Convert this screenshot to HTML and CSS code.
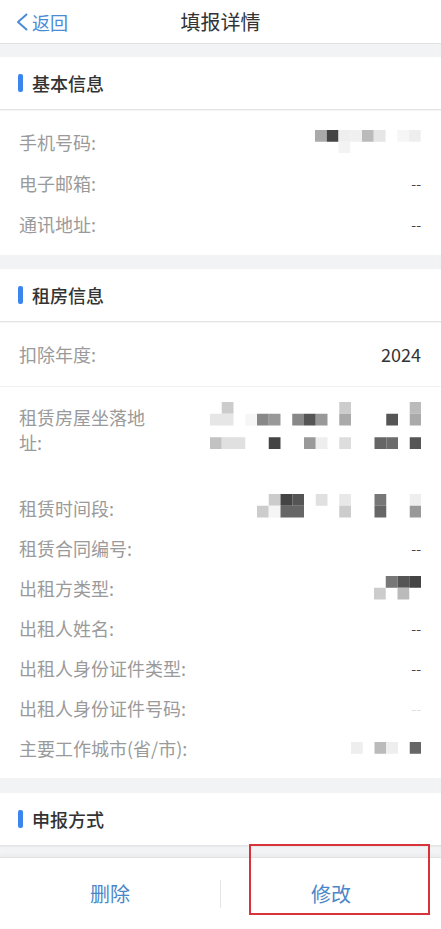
FILE: index.html
```html
<!DOCTYPE html>
<html>
<head>
   <title>填报详情</title>
   <meta charset="utf-8">
   <meta name="viewport" content="width=device-width, initial-scale=1">
   <link rel="stylesheet" href="styles.css">
</head>
<body>
   <header class="topbar">
      <a class="back" href="#">
         <svg class="chevron" width="12" height="18" viewBox="0 0 12 18"><polyline points="10.5,1.5 2,9 10.5,16.5" fill="none" stroke="#4a8bd6" stroke-width="2" stroke-linecap="round" stroke-linejoin="round"/></svg>返回
      </a>
      <h1 class="title">填报详情</h1>
      <span></span>
   </header>

   <!-- 基本信息 -->
   <section class="section">
      <div class="section-head">基本信息</div>
      <div class="section-body basic">
         <div class="row">
            <span class="label">手机号码:</span>
            <svg class="mosaic" width="105.75" height="23.5" viewBox="0 0 9 2">
               <rect x="0" y="0" width="1" height="1" fill="#aaa"/>
               <rect x="1" y="0" width="1" height="1" fill="#444"/>
               <rect x="2" y="0" width="1" height="1" fill="#eee"/>
               <rect x="3" y="0" width="1" height="1" fill="#f0f0f0"/>
               <rect x="4" y="0" width="1" height="1" fill="#bbb"/>
               <rect x="5" y="0" width="1" height="1" fill="#e6e6e6"/>
               <rect x="7" y="0" width="1" height="1" fill="#f6f6f6"/>
               <rect x="8" y="0" width="1" height="1" fill="#eee"/>
               <rect x="2" y="1" width="1" height="1" fill="#f3f3f3"/>
            </svg>
         </div>
         <div class="row">
            <span class="label">电子邮箱:</span>
            <span class="empty">--</span>
         </div>
         <div class="row">
            <span class="label">通讯地址:</span>
            <span class="empty">--</span>
         </div>
      </div>
   </section>

   <!-- 租房信息 -->
   <section class="section">
      <div class="section-head">租房信息</div>
      <div class="section-body rent">
         <div class="row year">
            <span class="label">扣除年度:</span>
            <span class="value">2024</span>
         </div>
         <div class="row address">
            <span class="label">租赁房屋坐落地址:</span>
            <svg class="mosaic" width="211.5" height="47" viewBox="0 0 18 4">
               <rect x="1" y="0" width="1" height="1" fill="#ccc"/>
               <rect x="11" y="0" width="1" height="1" fill="#ccc"/>
               <rect x="17" y="0" width="1" height="1" fill="#bbb"/>
               <rect x="0" y="1" width="2" height="1" fill="#e6e6e6"/>
               <rect x="3" y="1" width="1" height="1" fill="#f6f6f6"/>
               <rect x="4" y="1" width="1" height="1" fill="#888"/>
               <rect x="5" y="1" width="1" height="1" fill="#999"/>
               <rect x="7" y="1" width="1" height="1" fill="#888"/>
               <rect x="8" y="1" width="1" height="1" fill="#555"/>
               <rect x="9" y="1" width="1" height="1" fill="#999"/>
               <rect x="11" y="1" width="1" height="1" fill="#aaa"/>
               <rect x="15" y="1" width="1" height="1" fill="#555"/>
               <rect x="17" y="1" width="1" height="1" fill="#aaa"/>
               <rect x="0" y="3" width="1" height="1" fill="#c2c2c2"/>
               <rect x="1" y="3" width="2" height="1" fill="#e0e0e0"/>
               <rect x="5" y="3" width="1" height="1" fill="#444"/>
               <rect x="8" y="3" width="1" height="1" fill="#999"/>
               <rect x="9" y="3" width="1" height="1" fill="#eee"/>
               <rect x="11" y="3" width="1" height="1" fill="#ddd"/>
               <rect x="14" y="3" width="1" height="1" fill="#666"/>
               <rect x="15" y="3" width="1" height="1" fill="#6c6c6c"/>
               <rect x="17" y="3" width="1" height="1" fill="#555"/>
            </svg>
         </div>
         <div class="row">
            <span class="label">租赁时间段:</span>
            <svg class="mosaic up" width="164.5" height="23.5" viewBox="0 0 14 2">
               <rect x="1" y="0" width="1" height="1" fill="#ccc"/>
               <rect x="2" y="0" width="1" height="1" fill="#444"/>
               <rect x="3" y="0" width="1" height="1" fill="#555"/>
               <rect x="5" y="0" width="1" height="1" fill="#e0e0e0"/>
               <rect x="7" y="0" width="1" height="1" fill="#e8e8e8"/>
               <rect x="10" y="0" width="1" height="1" fill="#777"/>
               <rect x="13" y="0" width="1" height="1" fill="#eee"/>
               <rect x="0" y="1" width="1" height="1" fill="#ccc"/>
               <rect x="1" y="1" width="1" height="1" fill="#f5f5f5"/>
               <rect x="2" y="1" width="2" height="1" fill="#666"/>
               <rect x="7" y="1" width="1" height="1" fill="#ccc"/>
               <rect x="10" y="1" width="1" height="1" fill="#666"/>
               <rect x="13" y="1" width="1" height="1" fill="#999"/>
            </svg>
         </div>
         <div class="row">
            <span class="label">租赁合同编号:</span>
            <span class="empty">--</span>
         </div>
         <div class="row">
            <span class="label">出租方类型:</span>
            <svg class="mosaic" width="47" height="23.5" viewBox="0 0 4 2">
               <rect x="1" y="0" width="1" height="1" fill="#777"/>
               <rect x="2" y="0" width="1" height="1" fill="#555"/>
               <rect x="3" y="0" width="1" height="1" fill="#444"/>
               <rect x="0" y="1" width="1" height="1" fill="#ccc"/>
               <rect x="2" y="1" width="1" height="1" fill="#bbb"/>
            </svg>
         </div>
         <div class="row">
            <span class="label">出租人姓名:</span>
            <span class="empty">--</span>
         </div>
         <div class="row">
            <span class="label">出租人身份证件类型:</span>
            <span class="empty">--</span>
         </div>
         <div class="row">
            <span class="label">出租人身份证件号码:</span>
            <span class="empty faint">--</span>
         </div>
         <div class="row">
            <span class="label">主要工作城市(省/市):</span>
            <svg class="mosaic" width="70.5" height="11.75" viewBox="0 0 6 1">
               <rect x="0" y="0" width="1" height="1" fill="#eee"/>
               <rect x="2" y="0" width="1" height="1" fill="#bbb"/>
               <rect x="3" y="0" width="1" height="1" fill="#eee"/>
               <rect x="5" y="0" width="1" height="1" fill="#666"/>
            </svg>
         </div>
      </div>
   </section>

   <!-- 申报方式 -->
   <section class="section last">
      <div class="section-head">申报方式</div>
   </section>

   <div class="spacer"></div>

   <footer class="actions">
      <button class="action">删除</button>
      <i class="divider"></i>
      <button class="action">修改</button>
      <div class="highlight"></div>
   </footer>
</body>
</html>
```

FILE: styles.css
```css
body {
   margin: 0;
   width: 441px;
   background: #f2f3f5;
   font-family: "Noto Sans CJK SC", "Noto Sans", sans-serif;
   color: #333;
}
.topbar {
   display: grid;
   grid-template-columns: 1fr auto 1fr;
   align-items: center;
   height: 43px;
   background: #fff;
   border-bottom: 1px solid #e1e1e1;
}
.back {
   display: flex;
   align-items: center;
   padding-left: 16px;
   color: #4a8bd6;
   font-size: 18px;
   text-decoration: none;
}
.chevron {
   margin-right: 4px;
}
.title {
   margin: 0;
   font-size: 20px;
   font-weight: 400;
   color: #333;
}
.section {
   margin-top: 13px;
   background: #fff;
}
.section + .section {
   margin-top: 14px;
}
.section.last {
   margin-top: 15px;
}
.section-head {
   display: flex;
   align-items: center;
   height: 52px;
   padding-left: 18px;
   font-size: 18px;
   font-weight: 500;
   color: #333;
   border-bottom: 1px solid #e4e4e4;
   box-shadow: 0 1px 1px rgba(0, 0, 0, 0.04);
}
.section-head::before {
   content: "";
   width: 4.5px;
   height: 18px;
   margin-right: 9.5px;
   border-radius: 2px;
   background: #3d85ee;
}
.section-body {
   padding: 0 20px 0 19px;
}
.section-body.basic {
   padding-top: 11px;
   padding-bottom: 11px;
}
.section-body.basic .row {
   height: 41px;
}
.section-body.rent {
   padding-bottom: 10px;
}
.row {
   display: flex;
   align-items: center;
   justify-content: space-between;
   height: 40px;
   font-size: 18px;
}
.label {
   color: #9a9a9a;
}
.value {
   color: #333;
}
.empty {
   font-size: 14px;
   color: #444;
}
.empty.faint {
   color: #ddd;
}
.row.year {
   height: 64px;
   margin: 0 -20px 0 -19px;
   padding: 0 20px 0 19px;
   border-bottom: 1px solid #f1f1f1;
}
.row.address {
   height: auto;
   align-items: flex-start;
   padding: 18px 0 33px;
   line-height: 25px;
}
.row.address .label {
   max-width: 135px;
}
.row.address .mosaic {
   margin-top: -3px;
}
.mosaic {
   display: block;
}
.mosaic.up {
   margin-bottom: 4px;
}
.spacer {
   height: 11px;
}
.actions {
   position: relative;
   display: flex;
   align-items: center;
   height: 71px;
   background: #fff;
   border-top: 1px solid #e2e2e2;
   box-shadow: 0 -2px 4px rgba(0, 0, 0, 0.04);
}
.action {
   flex: 1;
   height: 100%;
   border: none;
   background: none;
   font-family: inherit;
   font-size: 20px;
   color: #4a86c8;
}
.divider {
   width: 1px;
   height: 28px;
   background: #e5e5e5;
}
.highlight {
   position: absolute;
   left: 249px;
   top: -14px;
   width: 181px;
   height: 71px;
   box-sizing: border-box;
   border: 2px solid #d8333b;
}
```
